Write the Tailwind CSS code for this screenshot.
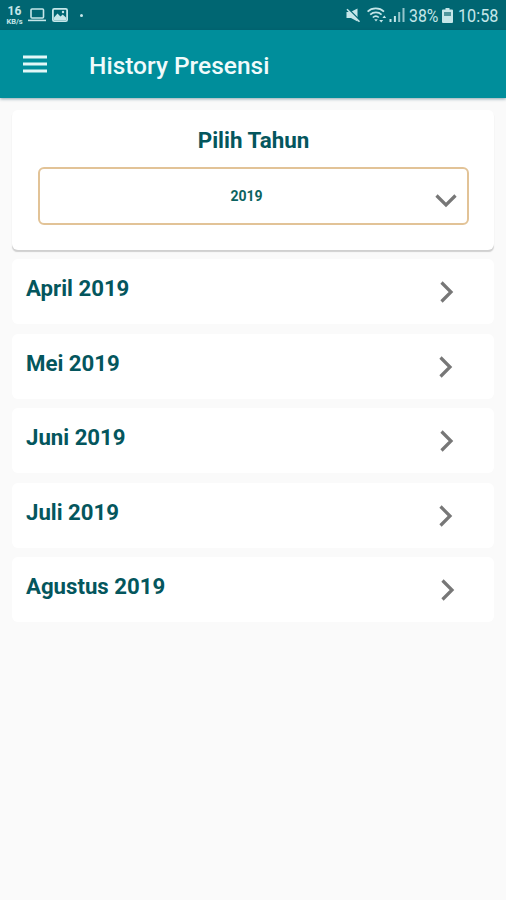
<!DOCTYPE html>
<html lang="id">
<head>
  <meta charset="UTF-8">
  <meta name="viewport" content="width=device-width, initial-scale=1.0">
  <title>History Presensi</title>
  <script src="https://cdn.jsdelivr.net/npm/@tailwindcss/browser@4"></script>
</head>
<body class="bg-[#fafafa] min-h-screen overflow-hidden font-[Roboto,sans-serif]">

  <!-- Status Bar -->
  <div class="h-[30px] bg-[#006672] flex items-center justify-between pl-[5px] pr-2 text-[#c5e6e9]">
    <div class="flex items-center">
      <div class="w-[19px] text-center font-bold">
        <div class="text-[12px] leading-[13px]">16</div>
        <div class="text-[7.500px] leading-[8px]">KB/s</div>
      </div>
      <svg class="ml-1 w-[18px] h-[14px]" viewBox="0 0 18 14" fill="none" stroke="currentColor" stroke-width="1.6">
        <rect x="3" y="1" width="12.5" height="9" rx="1" />
        <path d="M0 12.4h18" />
      </svg>
      <svg class="ml-1.5 w-4 h-[14px]" viewBox="0 0 16 14">
        <rect x="0.9" y="0.9" width="14.2" height="12.2" rx="1.4" fill="none" stroke="currentColor" stroke-width="1.8" />
        <path d="M2 12V9.500l3.500-4 3 3 2.200-2L14 9.500V12z" fill="currentColor" />
        <circle cx="11" cy="4" r="1.2" fill="currentColor" />
      </svg>
      <div class="ml-3 w-[3px] h-[3px] rounded-full bg-[#c5e6e9]"></div>
    </div>

    <div class="flex items-center">
      <svg class="w-[15px] h-4" viewBox="0 0 15 16">
        <path d="M0.500 5h4L11.500 1.500v13L5 11H0.500z" fill="currentColor" />
        <path d="M1 0.500l13 13" stroke="#006672" stroke-width="1.4" />
        <path d="M1 2.200L13.500 14.700" stroke="currentColor" stroke-width="1.6" />
      </svg>
      <svg class="ml-1.5 w-5 h-4" viewBox="0 0 20 16" fill="none" stroke="currentColor" stroke-width="1.7">
        <path d="M0.6 4.6C5 0.4 12.5 0.4 17 4.6" />
        <path d="M3.2 7.6c3.3-3 8.2-3 11.4 0" />
        <path d="M5.8 10.5c1.8-1.7 4.3-1.7 6 0" />
        <path d="M7.2 12.3L9 14.6l1.8-2.3z" fill="currentColor" stroke="none" />
        <path d="M12.2 13l2 2.5 2-2.5zM15.4 11l1.9-2.5 1.9 2.5z" fill="currentColor" stroke="none" />
      </svg>
      <svg class="ml-0.5 w-4 h-4" viewBox="0 0 16 16" fill="none" stroke="currentColor" stroke-width="2">
        <path d="M1.5 15v-3M5.9 15V9" />
        <path d="M10.2 15V5M14.5 15V1" stroke-opacity="0.75" />
      </svg>
      <span class="ml-1 w-[30px] text-[18px] leading-[30px] whitespace-nowrap pt-px"><span class="inline-block origin-left scale-x-[0.88]">38%</span></span>
      <svg class="ml-[3px] w-[11px] h-[15px]" viewBox="0 0 11 15" fill="currentColor">
        <path d="M3.5 0h4v1.5H10a1 1 0 0 1 1 1V14a1 1 0 0 1-1 1H1a1 1 0 0 1-1-1V2.500a1 1 0 0 1 1-1h2.500z" />
        <path d="M2 4h7v4H2z" fill="#4e969d" />
      </svg>
      <span class="ml-[5px] w-[40px] text-[18px] leading-[30px] whitespace-nowrap pt-px"><span class="inline-block origin-left scale-x-[0.9]">10:58</span></span>
    </div>
  </div>

  <!-- App Bar -->
  <header class="relative h-[68px] bg-[#008e9b] flex items-center pl-[23px] shadow-[0_1px_3px_rgba(0,60,80,0.45)]">
    <svg class="-mt-px w-6 h-[18px]" viewBox="0 0 24 18" fill="#e2f7f8">
      <path d="M0 0.500h24v3H0zM0 7.500h24v3H0zM0 14.500h24v3H0z" />
    </svg>
    <h1 class="ml-[42px] pt-[4px] text-[24.500px] font-medium text-[#f0fbfb] whitespace-nowrap">History Presensi</h1>
  </header>

  <main class="px-3 pt-3">
    <!-- Year Picker -->
    <section class="h-[140px] bg-white rounded-md pl-[26px] pr-[25px] pt-[15px] shadow-[0_2px_1px_-0.5px_#d0d0d0]">
      <h2 class="h-[42px] text-center text-[22.400px] leading-[30px] font-bold text-[#04565d]">Pilih Tahun</h2>
      <button class="relative w-full h-[58px] border-2 border-[#e2c397] rounded-md flex items-center justify-center">
        <span class="mr-[14px] mt-px text-[14px] font-bold text-[#0b6360]">2019</span>
        <svg class="absolute right-[10px] top-[25px] w-[22px] h-[14px]" viewBox="0 0 22 14" fill="none" stroke="#777" stroke-width="3.200">
          <path d="M1.500 1.500L11 11l9.500-9.500" />
        </svg>
      </button>
    </section>

    <!-- Month List -->
    <ul class="mt-[9px] flex flex-col gap-[9.600px] text-[22.200px] leading-[30px] font-bold text-[#04565d]">
      <li class="h-[65px] bg-white rounded-md pl-3.5 pr-10 pt-3.5 flex justify-between">
        <span>April 2019</span>
        <svg class="mt-2 w-[14px] h-[22px]" viewBox="0 0 14 22" fill="none" stroke="#777" stroke-width="3.200"><path d="M1.500 1.500L11 11l-9.500 9.500" /></svg>
      </li>
      <li class="h-[65px] bg-white rounded-md pl-3.5 pr-[41px] pt-3.5 flex justify-between">
        <span>Mei 2019</span>
        <svg class="mt-2 w-[14px] h-[22px]" viewBox="0 0 14 22" fill="none" stroke="#777" stroke-width="3.200"><path d="M1.500 1.500L11 11l-9.500 9.500" /></svg>
      </li>
      <li class="h-[65px] bg-white rounded-md pl-3.5 pr-10 pt-3.5 flex justify-between">
        <span>Juni 2019</span>
        <svg class="mt-2 w-[14px] h-[22px]" viewBox="0 0 14 22" fill="none" stroke="#777" stroke-width="3.200"><path d="M1.500 1.500L11 11l-9.500 9.500" /></svg>
      </li>
      <li class="h-[65px] bg-white rounded-md pl-3.5 pr-[41px] pt-3.5 flex justify-between">
        <span>Juli 2019</span>
        <svg class="mt-2 w-[14px] h-[22px]" viewBox="0 0 14 22" fill="none" stroke="#777" stroke-width="3.200"><path d="M1.500 1.500L11 11l-9.500 9.500" /></svg>
      </li>
      <li class="h-[65px] bg-white rounded-md pl-3.5 pr-[39px] pt-3.5 flex justify-between">
        <span>Agustus 2019</span>
        <svg class="mt-2 w-[14px] h-[22px]" viewBox="0 0 14 22" fill="none" stroke="#777" stroke-width="3.200"><path d="M1.500 1.500L11 11l-9.500 9.500" /></svg>
      </li>
    </ul>
  </main>

</body>
</html>
